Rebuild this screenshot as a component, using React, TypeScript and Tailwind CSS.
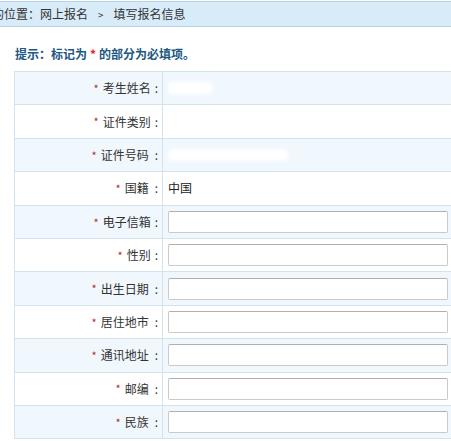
import React from "react";

const rows: { label: string; kind: "blank" | "text" | "input"; value?: string; blur?: number; gap?: boolean }[] = [
  { label: "考生姓名", kind: "blank", blur: 44 },
  { label: "证件类别", kind: "blank" },
  { label: "证件号码", kind: "blank", blur: 120, gap: true },
  { label: "国籍", kind: "text", value: "中国", gap: true },
  { label: "电子信箱", kind: "input" },
  { label: "性别", kind: "input" },
  { label: "出生日期", kind: "input", gap: true },
  { label: "居住地市", kind: "input", gap: true },
  { label: "通讯地址", kind: "input", gap: true },
  { label: "邮编", kind: "input", gap: true },
  { label: "民族", kind: "input", gap: true },
];

export default function App() {
  return (
    <div
      className="w-[451px] h-[441px] overflow-hidden bg-white text-[12px] text-[#333]"
      style={{ fontFamily: '"Noto Sans CJK SC", "Noto Sans", sans-serif' }}
    >
      <div className="mt-[1px] h-[26px] border-y border-[#b9d3e3] bg-[#d8ebf9] flex items-center whitespace-nowrap text-[#333] -ml-[20px]">
        <span>您的位置：网上报名</span>
        <span className="mx-[10px] text-[10px]">&gt;</span>
        <span>填写报名信息</span>
      </div>
      <div className="mt-[19px] ml-[15px] h-[16px] flex items-center font-bold text-[#22577f] whitespace-nowrap">
        提示：标记为 <span className="text-[#d22] mx-[3px]">*</span> 的部分为必填项。
      </div>
      <div className="mt-[9px] ml-[14px] w-[470px] border-l border-t border-[#d3e3ec]">
        {rows.map((r, i) => (
          <div
            key={r.label}
            className={`grid grid-cols-[148px_1fr] h-[33.4px] border-b border-[#d3e3ec] ${
              i % 2 === 0 ? "bg-[#f0f7fd]" : "bg-white"
            }`}
          >
            <div className="border-r border-[#d3e3ec] flex items-center justify-end pr-[4px] whitespace-nowrap">
              <span className="text-[#b03030] text-[11px] mr-[4px]">*</span>
              <span>{r.label}</span>
              <span className={r.gap ? "ml-[6px]" : "ml-[4px]"}>:</span>
            </div>
            <div className="flex items-center pl-[5px]">
              {r.kind === "text" && <span className="text-[#222]">{r.value}</span>}
              {r.kind === "blank" && r.blur && (
                <div className="h-[12px] rounded-sm bg-white blur-[2px]" style={{ width: r.blur }} />
              )}
              {r.kind === "input" && (
                <div className="w-[280px] h-[22px] rounded-[2px] border border-[#cacaca] border-t-[#afafaf] bg-white" />
              )}
            </div>
          </div>
        ))}
      </div>
    </div>
  );
}
